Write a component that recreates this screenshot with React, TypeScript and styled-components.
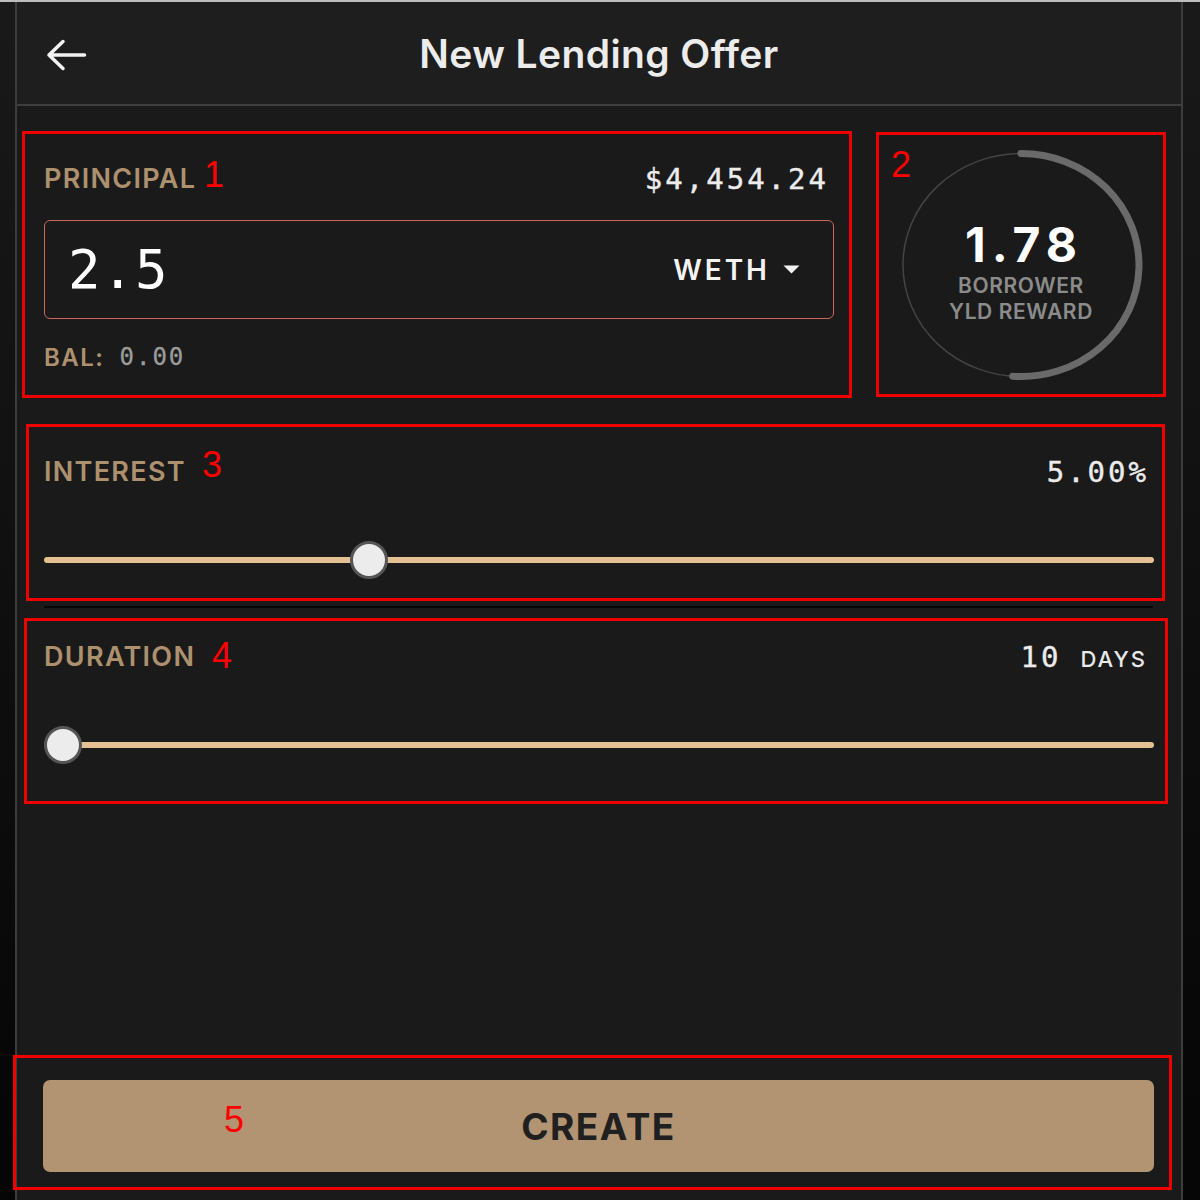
import React from "react";
import styled, { createGlobalStyle } from "styled-components";

const Global = createGlobalStyle`
  html, body { margin: 0; padding: 0; background: #000; }
  body { font-family: Inter, "Noto Sans", sans-serif; }
  * { box-sizing: border-box; }
`;

const MONO = `"DejaVu Sans Mono", "Liberation Mono", monospace`;
const SANS = `Inter, "Noto Sans", sans-serif`;
const TAN = "#ad916f";

const Screen = styled.div`
  width: 1200px;
  height: 1200px;
  display: flex;
  padding: 0 17px 0 15px;
  border-top: 2px solid #bdbdbd;
  background: linear-gradient(#191919, #050505);
  overflow: hidden;
`;

const Panel = styled.main`
  width: 1168px;
  height: 1198px;
  display: flex;
  flex-direction: column;
  background: #1a1a1a;
  border-left: 2px solid #3c3c3c;
  border-right: 2px solid #3c3c3c;
`;

const Header = styled.header`
  height: 104px;
  flex: none;
  display: grid;
  grid-template-columns: 1fr auto 1fr;
  align-items: center;
  padding: 0 29px;
  background: #1e1e1e;
  border-bottom: 2px solid #3e3e3e;
`;

const BackButton = styled.button`
  justify-self: start;
  display: flex;
  padding: 0;
  margin-top: 3px;
  border: none;
  background: none;
  cursor: pointer;
`;

const Title = styled.h1`
  margin: 0;
  font-family: ${SANS};
  font-weight: 600;
  font-size: 39px;
  color: #ececec;
  letter-spacing: 0.4px;
`;

const Body = styled.div`
  flex: 1;
  display: flex;
  flex-direction: column;
`;

const TopRow = styled.div`
  display: flex;
  gap: 24px;
  margin: 25px 0 0 5px;
`;

const Annot = styled.section<{ $ml?: number; $mt?: number; $w: number }>`
  position: relative;
  width: ${(p) => p.$w}px;
  margin-left: ${(p) => p.$ml ?? 0}px;
  margin-top: ${(p) => p.$mt ?? 0}px;
  border: 3px solid #ee0000;
`;

const PrincipalBox = styled(Annot)`
  padding: 30px 15px 26px 19px;
  display: flex;
  flex-direction: column;
`;

const RewardBox = styled(Annot)`
  height: 265px;
  display: flex;
  align-items: center;
  justify-content: center;
`;

const SliderBox = styled(Annot)<{ $pt: number; $pr: number; $pb: number; $pl: number }>`
  padding: ${(p) => `${p.$pt}px ${p.$pr}px ${p.$pb}px ${p.$pl}px`};
  display: flex;
  flex-direction: column;
`;

const ButtonBox = styled(Annot)`
  margin-top: auto;
  margin-bottom: 10px;
  padding: 22px 15px 15px 27px;
`;

const Mark = styled.span<{ $x: number; $y: number }>`
  position: absolute;
  left: ${(p) => p.$x}px;
  top: ${(p) => p.$y}px;
  font-family: "Liberation Sans", Arial, sans-serif;
  font-size: 36px;
  line-height: 1;
  color: #ff0000;
`;

const FieldRow = styled.div<{ $pr?: number }>`
  display: flex;
  align-items: center;
  justify-content: space-between;
  height: 30px;
  padding-right: ${(p) => p.$pr ?? 0}px;
`;

const Label = styled.span`
  font-family: ${SANS};
  font-weight: 600;
  font-size: 27px;
  letter-spacing: 1.3px;
  line-height: 30px;
  color: ${TAN};
`;

const Value = styled.span<{ $size?: number }>`
  font-family: ${MONO};
  font-size: ${(p) => p.$size ?? 29}px;
  letter-spacing: 3px;
  line-height: 30px;
  color: #ececec;
  -webkit-text-stroke: 0.4px #ececec;
`;

const Unit = styled.span`
  font-family: ${SANS};
  font-weight: 500;
  font-size: 22px;
  letter-spacing: 2px;
  color: #e8e8e8;
  margin-left: 19px;
`;

const InputBox = styled.div`
  margin-top: 26px;
  height: 99px;
  display: flex;
  align-items: center;
  justify-content: space-between;
  padding: 0 33px 0 23px;
  border: 1px solid #cc665e;
  border-radius: 6px;
`;

const AmountText = styled.span`
  font-family: ${MONO};
  font-size: 54px;
  letter-spacing: 1px;
  line-height: 1;
  color: #ffffff;
`;

const TokenSelect = styled.div`
  display: flex;
  align-items: center;
  gap: 13px;
  font-family: ${SANS};
  font-weight: 600;
  font-size: 28px;
  letter-spacing: 3px;
  color: #f3f3f3;
`;

const BalRow = styled.div`
  margin-top: 26px;
  height: 24px;
  display: flex;
  align-items: center;
  gap: 15px;
`;

const BalLabel = styled.span`
  font-family: ${SANS};
  font-weight: 600;
  font-size: 24px;
  letter-spacing: 1.5px;
  color: ${TAN};
`;

const BalValue = styled.span`
  font-family: ${MONO};
  font-size: 24px;
  letter-spacing: 2px;
  color: #9b9b9b;
  -webkit-text-stroke: 0.3px #9b9b9b;
`;

const Gauge = styled.div`
  position: relative;
  width: 244px;
  height: 232px;
  display: flex;
  flex-direction: column;
  align-items: center;
  justify-content: center;
  padding-top: 16px;
  svg {
    position: absolute;
    inset: 0;
  }
`;

const GaugeValue = styled.div`
  position: relative;
  font-family: ${SANS};
  font-weight: 700;
  font-size: 48px;
  line-height: 48px;
  letter-spacing: 6px;
  margin-right: -6px;
  color: #ffffff;
`;

const GaugeLabel = styled.div`
  position: relative;
  margin-top: 4px;
  font-family: ${SANS};
  font-weight: 600;
  font-size: 21px;
  line-height: 26px;
  letter-spacing: 0.6px;
  text-align: center;
  color: #8b8b8b;
`;

const SliderWrap = styled.div<{ $mr: number }>`
  position: relative;
  height: 40px;
  margin-top: 53px;
  margin-right: ${(p) => p.$mr}px;
  display: flex;
  align-items: center;
`;

const Track = styled.div`
  width: 100%;
  height: 6px;
  border-radius: 3px;
  background: #e4c193;
`;

const Thumb = styled.div`
  position: absolute;
  top: 1px;
  width: 38px;
  height: 38px;
  border-radius: 50%;
  background: #ececec;
  border: 3px solid #555555;
`;

const Divider = styled.hr`
  margin: 5px 0 10px 27px;
  width: 1109px;
  height: 2px;
  border: none;
  background: #070707;
`;

const CreateButton = styled.button`
  width: 100%;
  height: 92px;
  border: none;
  border-radius: 7px;
  background: #b29473;
  font-family: ${SANS};
  font-weight: 700;
  font-size: 37px;
  letter-spacing: 1.5px;
  color: #202020;
  cursor: pointer;
`;

function Slider({ pct, mr }: { pct: number; mr: number }) {
  return (
    <SliderWrap $mr={mr}>
      <Track />
      <Thumb style={{ left: `calc((100% - 38px) * ${pct})` }} />
    </SliderWrap>
  );
}

function BackArrow() {
  return (
    <svg width="42" height="32" viewBox="0 0 42 32" fill="none">
      <path
        d="M3 16H38.5M17 2.5L3 16L17 29.5"
        stroke="#f2f2f2"
        strokeWidth="3.5"
        strokeLinecap="round"
        strokeLinejoin="round"
      />
    </svg>
  );
}

function Caret() {
  return (
    <svg width="17" height="9" viewBox="0 0 17 9">
      <path d="M0.5 0.5H16.5L8.5 8.5Z" fill="#f3f3f3" />
    </svg>
  );
}

function RewardGauge() {
  const cx = 122;
  const cy = 116;
  const rx = 118;
  const ry = 111.5;
  const theta = (184 * Math.PI) / 180;
  const ex = cx + rx * Math.sin(theta);
  const ey = cy - ry * Math.cos(theta);
  return (
    <Gauge>
      <svg width="244" height="232" viewBox="0 0 244 232" fill="none">
        <ellipse cx={cx} cy={cy} rx={rx} ry={ry} stroke="#444444" strokeWidth="1.5" />
        <path
          d={`M${cx} ${cy - ry} A${rx} ${ry} 0 1 1 ${ex.toFixed(2)} ${ey.toFixed(2)}`}
          stroke="#6a6a6a"
          strokeWidth="7"
          strokeLinecap="round"
        />
      </svg>
      <GaugeValue>1.78</GaugeValue>
      <GaugeLabel>
        BORROWER
        <br />
        YLD REWARD
      </GaugeLabel>
    </Gauge>
  );
}

export default function App() {
  return (
    <>
      <Global />
      <Screen>
        <Panel>
          <Header>
            <BackButton aria-label="Back">
              <BackArrow />
            </BackButton>
            <Title>New Lending Offer</Title>
            <span />
          </Header>
          <Body>
            <TopRow>
              <PrincipalBox $w={830}>
                <Mark $x={179} $y={23}>1</Mark>
                <FieldRow $pr={5}>
                  <Label>PRINCIPAL</Label>
                  <Value>$4,454.24</Value>
                </FieldRow>
                <InputBox>
                  <AmountText>2.5</AmountText>
                  <TokenSelect>
                    WETH
                    <Caret />
                  </TokenSelect>
                </InputBox>
                <BalRow>
                  <BalLabel>BAL:</BalLabel>
                  <BalValue>0.00</BalValue>
                </BalRow>
              </PrincipalBox>
              <RewardBox $w={290} $mt={1}>
                <Mark $x={12} $y={12}>2</Mark>
                <RewardGauge />
              </RewardBox>
            </TopRow>

            <SliderBox $w={1139} $ml={9} $mt={26} $pt={30} $pr={13} $pb={18} $pl={15}>
              <Mark $x={173} $y={20}>3</Mark>
              <FieldRow>
                <Label>INTEREST</Label>
                <Value>5.00%</Value>
              </FieldRow>
              <Slider pct={0.285} mr={-5} />
            </SliderBox>

            <Divider />

            <SliderBox $w={1144} $ml={7} $pt={21} $pr={18} $pb={36} $pl={17}>
              <Mark $x={185} $y={17}>4</Mark>
              <FieldRow>
                <Label>DURATION</Label>
                <span>
                  <Value>10</Value>
                  <Unit>DAYS</Unit>
                </span>
              </FieldRow>
              <Slider pct={0} mr={-7} />
            </SliderBox>

            <ButtonBox $w={1159} $ml={-4}>
              <Mark $x={208} $y={44}>5</Mark>
              <CreateButton>CREATE</CreateButton>
            </ButtonBox>
          </Body>
        </Panel>
      </Screen>
    </>
  );
}
